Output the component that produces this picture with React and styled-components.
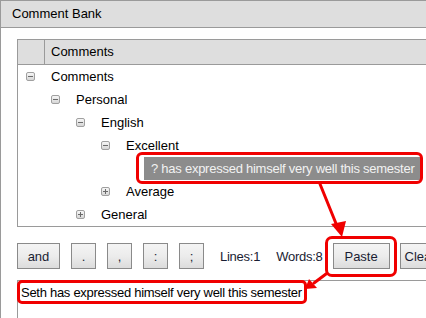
import React from "react"
import styled, { createGlobalStyle } from "styled-components"

const GlobalStyle = createGlobalStyle`
  html, body {
    margin: 0;
    padding: 0;
    background: #ffffff;
  }
  body {
    font-family: "Liberation Sans", Arial, sans-serif;
    font-size: 13px;
    color: #000;
  }
`

const tree = [
  { level: 0, toggle: "minus", label: "Comments" },
  { level: 1, toggle: "minus", label: "Personal" },
  { level: 2, toggle: "minus", label: "English" },
  { level: 3, toggle: "minus", label: "Excellent" },
  { level: 4, toggle: null, label: "? has expressed himself very well this semester", selected: true },
  { level: 3, toggle: "plus", label: "Average" },
  { level: 2, toggle: "plus", label: "General" },
]

const tokens = ["and", ".", ",", ":", ";"]

const App = () => (
  <>
    <GlobalStyle />
    <Window>
      <TitleBar>Comment Bank</TitleBar>
      <Body>
        <Grid>
          <GridHeader>
            <HeaderGutter />
            <HeaderCell>Comments</HeaderCell>
          </GridHeader>
          <Tree>
            {tree.map((node, i) => (
              <TreeRow key={i} level={node.level}>
                {node.toggle ? <Toggle kind={node.toggle} /> : <TogglePlaceholder />}
                <NodeLabel selected={node.selected}>{node.label}</NodeLabel>
              </TreeRow>
            ))}
          </Tree>
        </Grid>

        <Toolbar>
          <TokenGroup>
            {tokens.map(t => (
              <Button key={t} size={t === "and" ? "wide" : "small"}>{t}</Button>
            ))}
          </TokenGroup>
          <Stat>Lines:1</Stat>
          <Stat>Words:8</Stat>
          <ActionGroup>
            <Button size="action" marked>Paste</Button>
            <Button size="long">Clear</Button>
          </ActionGroup>
        </Toolbar>

        <CommentBox>
          <CommentText>Seth has expressed himself very well this semester</CommentText>
        </CommentBox>
      </Body>

      <Arrows width="426" height="318" viewBox="0 0 426 318">
        <g stroke="#f00000" strokeWidth="3" fill="none" strokeLinecap="round">
          <line x1="320" y1="184" x2="337" y2="226" />
          <line x1="326" y1="274" x2="314" y2="283" />
        </g>
        <g fill="#f00000">
          <polygon points="331,224 346,221 342,237" />
          <polygon points="309,279 317,288 305,289" />
        </g>
      </Arrows>
    </Window>
  </>
)

export default App

const Window = styled.div`
  position: relative;
  width: 426px;
  height: 318px;
  overflow: hidden;
  box-sizing: border-box;
  border-left: 1px solid #9a9a9a;
  background: #fff;
`

const TitleBar = styled.div`
  height: 26px;
  line-height: 26px;
  padding-left: 11px;
  background: #dedede;
  border-top: 1px solid #9a9a9a;
  border-bottom: 1px solid #9a9a9a;
  white-space: nowrap;
`

const Body = styled.div`
  display: flex;
  flex-direction: column;
  padding: 11px 0 0 16px;
`

const Grid = styled.div`
  height: 186px;
  border: 1px solid #9a9a9a;
  border-right: none;
`

const GridHeader = styled.div`
  display: flex;
  height: 24px;
  background: #dedede;
  border-bottom: 1px solid #9a9a9a;
`

const HeaderGutter = styled.div`
  width: 26px;
  border-right: 1px solid #9a9a9a;
`

const HeaderCell = styled.div`
  flex: 1;
  padding-left: 6px;
  line-height: 24px;
`

const Tree = styled.div`
  display: flex;
  flex-direction: column;
`

const TreeRow = styled.div`
  display: flex;
  align-items: center;
  height: 23px;
  padding-left: ${p => 8 + p.level * 25}px;
  white-space: nowrap;
`

const Toggle = styled.span`
  position: relative;
  flex: none;
  width: 9px;
  height: 9px;
  box-sizing: border-box;
  margin-right: 16px;
  border: 1px solid #a0a0a0;
  border-radius: 2px;
  background: linear-gradient(#f6f6f6, #d6d6d6);

  &::before {
    content: "";
    position: absolute;
    left: 1px;
    top: 3px;
    width: 5px;
    height: 1px;
    background: #6a6a6a;
  }

  &::after {
    content: "";
    display: ${p => (p.kind === "plus" ? "block" : "none")};
    position: absolute;
    left: 3px;
    top: 1px;
    width: 1px;
    height: 5px;
    background: #6a6a6a;
  }
`

const TogglePlaceholder = styled.span`
  flex: none;
  width: 9px;
  margin-right: 16px;
`

const NodeLabel = styled.span`
  position: relative;
  line-height: 23px;
  ${p =>
    p.selected &&
    `
    margin-left: -7px;
    padding: 0 5px 0 7px;
    background: #8c8c8c;
    color: #f2f2f2;
    letter-spacing: -0.25px;

    &::after {
      content: "";
      position: absolute;
      left: -8px;
      right: -3px;
      top: -5px;
      bottom: -4px;
      border: 3px solid #f00000;
      border-radius: 6px;
    }
  `}
`

const Toolbar = styled.div`
  display: flex;
  align-items: center;
  margin-top: 16px;
  height: 26px;
  white-space: nowrap;
`

const TokenGroup = styled.div`
  display: flex;
  gap: 11px;
  margin-right: 16px;
`

const ActionGroup = styled.div`
  display: flex;
  gap: 10px;
  margin-left: 10px;
`

const buttonWidths = { small: "25px", wide: "43px", action: "57px", long: "60px" }

const Button = styled.button`
  position: relative;
  flex: none;
  height: 26px;
  width: ${p => buttonWidths[p.size]};
  padding: ${p => (p.size === "long" ? "0 0 0 4px" : "0")};
  text-align: ${p => (p.size === "long" ? "left" : "center")};
  box-sizing: border-box;
  font-family: "Liberation Sans", Arial, sans-serif;
  font-size: 13px;
  color: #1a1d33;
  border: 1px solid #8a8a8a;
  border-radius: 0;
  background: linear-gradient(#f4f4f4 0%, #ececec 50%, #dcdcdc 100%);

  ${p =>
    p.marked &&
    `
    &::after {
      content: "";
      position: absolute;
      left: -9px;
      right: -8px;
      top: -8px;
      bottom: -9px;
      border: 3px solid #f00000;
      border-radius: 7px;
    }
  `}
`

const Stat = styled.span`
  color: #1a1d33;
  letter-spacing: -0.25px;
  margin-right: 16px;
  &:last-of-type {
    margin-right: 0;
  }
`

const CommentBox = styled.div`
  margin-top: 11px;
  height: 60px;
  border-top: 1px solid #9a9a9a;
  border-left: 1px solid #9a9a9a;
  padding: 3px 0 0 3px;
`

const CommentText = styled.span`
  position: relative;
  display: inline-block;
  line-height: 17px;
  white-space: nowrap;
  letter-spacing: -0.28px;

  &::after {
    content: "";
    position: absolute;
    left: -4px;
    right: -5px;
    top: -4px;
    bottom: -3px;
    border: 3px solid #f00000;
    border-radius: 5px;
  }
`

const Arrows = styled.svg`
  position: absolute;
  left: -1px;
  top: 0;
  pointer-events: none;
`
